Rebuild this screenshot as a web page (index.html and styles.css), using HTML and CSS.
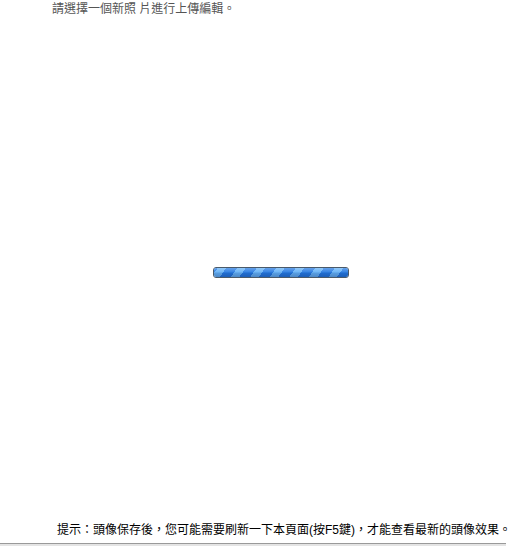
FILE: index.html
```html
<!DOCTYPE html>
<html>
<head>
<meta charset="utf-8">
<link rel="stylesheet" href="styles.css">
</head>
<body>
<div class="page">
  <p class="intro">請選擇一個新照 片進行上傳編輯。</p>
  <div class="stage">
    <div class="bar"><div class="bar-fill"></div></div>
  </div>
  <p class="tip">提示：頭像保存後，您可能需要刷新一下本頁面(按F5鍵)，才能查看最新的頭像效果。</p>
  <div class="rule"></div>
</div>
</body>
</html>
```
FILE: styles.css
```css
html, body {
  margin: 0;
  padding: 0;
  background: #fff;
}
.page {
  height: 546px;
  display: flex;
  flex-direction: column;
  font-family: "Liberation Sans", "Noto Sans CJK TC", sans-serif;
  font-size: 12px;
}
.intro {
  margin: 0;
  padding: 1px 0 0 52px;
  line-height: 16px;
  color: #555;
}
.stage {
  flex: 1;
  display: flex;
  align-items: center;
  justify-content: center;
  margin-left: 52px;
  width: 458px;
  padding-bottom: 2px;
}
.bar {
  width: 134px;
  height: 9px;
  border: 1px solid #4a5a6a;
  border-radius: 3px;
  background: #1f6fd8;
  overflow: hidden;
  margin-top: 7px;
}
.bar-fill {
  height: 100%;
  background:
    linear-gradient(to bottom, rgba(255,255,255,0.3) 0, rgba(255,255,255,0.08) 45%, rgba(0,0,40,0.1) 55%, rgba(0,0,40,0.22) 100%),
    repeating-linear-gradient(-55deg, #2479e2 0, #2479e2 9px, #62b0f6 9px, #62b0f6 16px);
}
.tip {
  margin: 0;
  padding-left: 57px;
  line-height: 16px;
  color: #000;
  white-space: nowrap;
}
.rule {
  margin-top: 5px;
  height: 1px;
  width: 506px;
  background: #9a9a9a;
  border-bottom: 2px solid #e4e4e4;
}
```
